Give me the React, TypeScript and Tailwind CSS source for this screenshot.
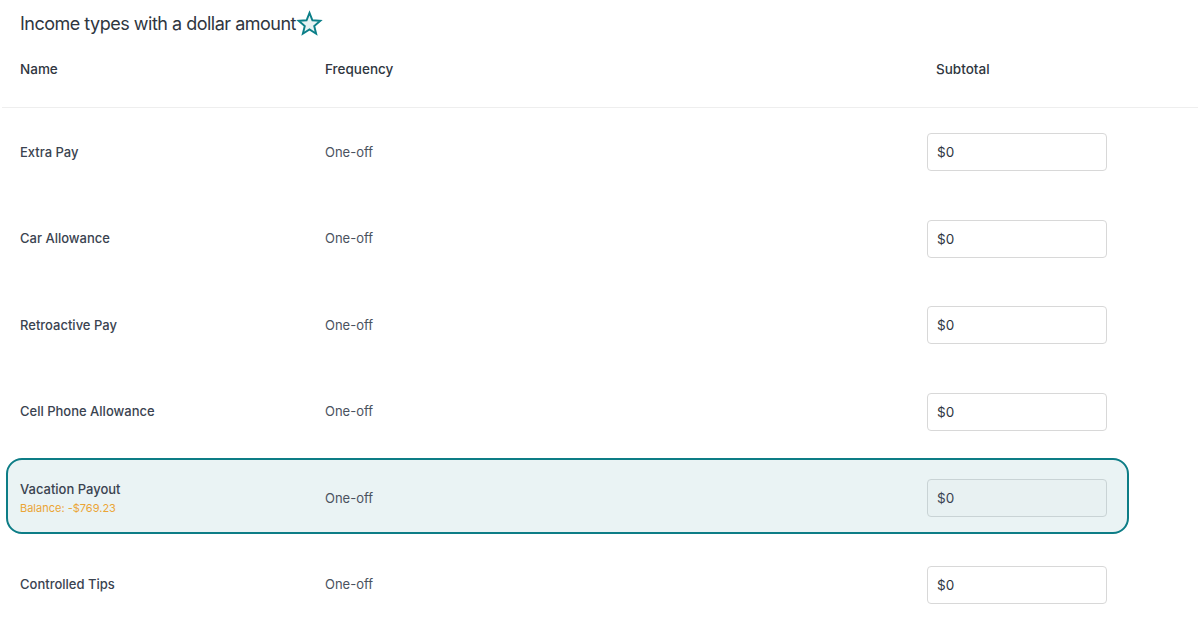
import React from "react";

const rows = [
  { name: "Extra Pay" },
  { name: "Car Allowance" },
  { name: "Retroactive Pay" },
  { name: "Cell Phone Allowance" },
  { name: "Vacation Payout", balance: "Balance: -$769.23", active: true },
  { name: "Controlled Tips" },
];

function Star() {
  return (
    <svg width="27" height="27" viewBox="0 0 24 24" className="shrink-0">
      <path
        d="M12 2.5l2.6 6.6 7 .5-5.4 4.6 1.7 6.9L12 17.3l-5.9 3.8 1.7-6.9L2.4 9.6l7-.5z"
        fill="#e7f3f4"
        stroke="#0b7f88"
        strokeWidth="1.7"
        strokeLinejoin="miter"
      />
    </svg>
  );
}

export default function App() {
  return (
    <div className="w-[1198px] h-[639px] overflow-hidden bg-white text-[#3a4350] [font-family:Inter,'Liberation_Sans',sans-serif]">
      <div className="flex items-center h-[46px] pl-5 pt-[1px]">
        <h1 className="text-[18px] text-[#2f3640] tracking-[-0.5px]">Income types with a dollar amount</h1>
        <Star />
      </div>
      <div className="grid grid-cols-[305px_602px_1fr] items-center h-[62px] pb-[15px] pl-5 border-b border-[#eeeeee] ml-[2px] text-[13.5px] font-medium text-[#2f3640]">
        <div className="-ml-[2px]">Name</div>
        <div className="-ml-[2px]">Frequency</div>
        <div className="pl-[7px]">Subtotal</div>
      </div>
      <div className="flex flex-col pt-[1px]">
        {rows.map((r) => (
          <div key={r.name} className="h-[86.5px] flex items-center">
            <div
              className={
                r.active
                  ? "grid grid-cols-[305px_602px_180px] items-center w-[1123px] h-[76px] ml-[6px] mb-[4px] pt-[4px] pl-[12px] rounded-[16px] border-2 border-[#0d7d86] bg-[#eaf3f4]"
                  : "grid grid-cols-[305px_602px_180px] items-center w-[1123px] h-[76px] ml-[6px] pl-[12px] border-2 border-transparent"
              }
            >
              <div className="flex flex-col">
                <span className="text-[13px] font-medium text-[#3a4350]">{r.name}</span>
                {r.balance && (
                  <span className="text-[11px] text-[#eba536] mt-[1px]">{r.balance}</span>
                )}
              </div>
              <div className="text-[13px] text-[#4a5260]">One-off</div>
              <div
                className={
                  r.active
                    ? "h-[38px] rounded-[4px] border border-[#c9d3d5] bg-[#e8f1f2] flex items-center pl-[9px] text-[13.5px] text-[#3a4350]"
                    : "h-[38px] rounded-[4px] border border-[#d8d8d8] bg-white flex items-center pl-[9px] text-[13.5px] text-[#2f3640]"
                }
              >
                $0
              </div>
            </div>
          </div>
        ))}
      </div>
    </div>
  );
}
